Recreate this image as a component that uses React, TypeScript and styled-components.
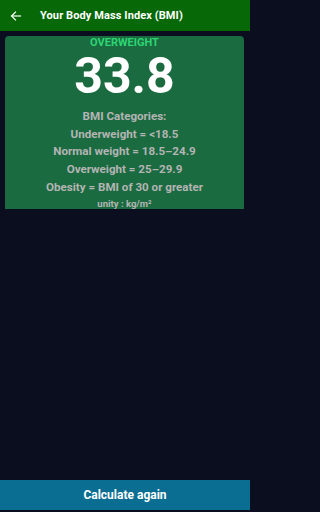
import React from 'react';
import styled, { createGlobalStyle } from 'styled-components';

const GlobalStyle = createGlobalStyle`
  html, body {
    margin: 0;
    padding: 0;
    background-color: #0a0e1f;
  }
  * {
    box-sizing: border-box;
  }
`;

const Screen = styled.div`
  width: 250px;
  height: 512px;
  display: flex;
  flex-direction: column;
  background-color: #0a0e1f;
  font-family: Roboto, "Liberation Sans", sans-serif;
`;

const AppBar = styled.div`
  height: 31px;
  display: flex;
  align-items: center;
  padding: 0 0 0 9px;
  background-color: #066806;
  color: #ffffff;
`;

const BackButton = styled.button`
  width: 14px;
  height: 14px;
  padding: 0;
  border: none;
  background: none;
  color: #ffffff;
  display: flex;
  align-items: center;
  justify-content: center;
  margin-right: 17px;
`;

const AppTitle = styled.h1`
  margin: 0;
  font-size: 11px;
  font-weight: 700;
  letter-spacing: 0.1px;
`;

const Content = styled.div`
  flex: 1;
  padding: 5px 6px 0 5px;
`;

const ResultCard = styled.div`
  height: 173px;
  background-color: #1a6b40;
  border-radius: 4px 4px 0 0;
  display: flex;
  flex-direction: column;
  align-items: center;
`;

const Status = styled.div`
  font-size: 11px;
  font-weight: 700;
  color: #2ed573;
  line-height: 13px;
`;

const Score = styled.div`
  font-size: 50px;
  font-weight: 700;
  color: #ffffff;
  line-height: 40px;
  margin-top: 7px;
`;

const CategoryLine = styled.div<{ small?: boolean }>`
  font-size: ${props => (props.small ? '9.5px' : '11.6px')};
  font-weight: 700;
  color: #b4b4b4;
  line-height: ${props => (props.small ? '13px' : '17.7px')};
`;

const Categories = styled.div`
  display: flex;
  flex-direction: column;
  align-items: center;
  margin-top: 12px;
`;

const Footer = styled.div`
  height: 32px;
  border-bottom: 2px solid #0a0e1f;
`;

const CalculateButton = styled.button`
  width: 100%;
  height: 30px;
  border: none;
  background-color: #0a6e93;
  color: #ffffff;
  font-family: Roboto, "Liberation Sans", sans-serif;
  font-size: 12px;
  font-weight: 700;
  padding: 0;
`;

const App: React.FC = () => {
  return (
    <>
      <GlobalStyle />
      <Screen>
        <AppBar>
          <BackButton aria-label="Back">
            <svg width="12" height="12" viewBox="0 0 24 24" fill="none" stroke="#ffffff" strokeWidth="2.4" strokeLinecap="square">
              <path d="M21 12H4" />
              <path d="M11 4l-8 8 8 8" />
            </svg>
          </BackButton>
          <AppTitle>Your Body Mass Index (BMI)</AppTitle>
        </AppBar>

        <Content>
          <ResultCard>
            <Status>OVERWEIGHT</Status>
            <Score>33.8</Score>
            <Categories>
              <CategoryLine>BMI Categories:</CategoryLine>
              <CategoryLine>Underweight = &lt;18.5</CategoryLine>
              <CategoryLine>Normal weight = 18.5–24.9</CategoryLine>
              <CategoryLine>Overweight = 25–29.9</CategoryLine>
              <CategoryLine>Obesity = BMI of 30 or greater</CategoryLine>
              <CategoryLine small>unity : kg/m²</CategoryLine>
            </Categories>
          </ResultCard>
        </Content>

        <Footer>
          <CalculateButton>Calculate again</CalculateButton>
        </Footer>
      </Screen>
    </>
  );
};

export default App;
